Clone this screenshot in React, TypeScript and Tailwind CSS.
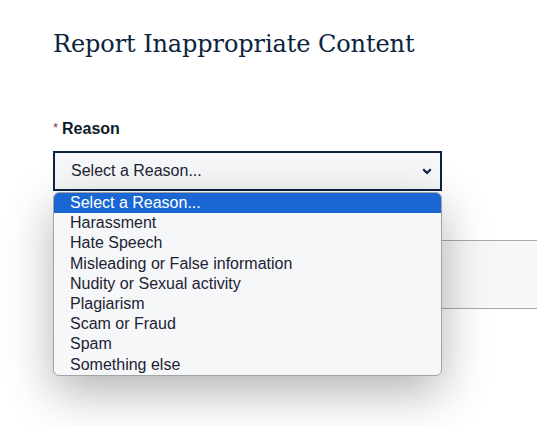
import React from "react";

const items = [
  "Select a Reason...",
  "Harassment",
  "Hate Speech",
  "Misleading or False information",
  "Nudity or Sexual activity",
  "Plagiarism",
  "Scam or Fraud",
  "Spam",
  "Something else",
];

export default function App() {
  return (
    <div className="w-[537px] h-[426px] overflow-hidden bg-white pl-[53px] pt-[27px] font-['Liberation_Sans',Arial,sans-serif]">
      <h1 className="text-[24px] leading-[34px] text-[#0c2340] font-['DejaVu_Serif',serif] tracking-[-0.1px] whitespace-nowrap">
        Report Inappropriate Content
      </h1>
      <div className="mt-[58px] flex items-baseline text-[16px] leading-[20px]">
        <span className="text-[#8a3b3b] text-[13px] mr-[4px] relative top-[-2px]">*</span>
        <span className="font-bold text-[#0d1b2a]">Reason</span>
      </div>
      <div className="relative mt-[11px] w-[389px]">
        <div className="h-[40px] border-2 border-[#0c2340] bg-[#f6f7f9] flex items-center pl-[16px] pr-[8px] text-[16px] text-[#1c2333]">
          <span className="flex-1">Select a Reason...</span>
          <svg width="10" height="7" viewBox="0 0 10 7" className="mt-[1px]">
            <path d="M1.2 1.3 L5 5 L8.8 1.3" fill="none" stroke="#0c2340" strokeWidth="2.2" />
          </svg>
        </div>
        <div className="absolute left-0 top-[41px] w-[389px] z-10 bg-[#f6f7f9] border border-[#a3a3a3] rounded-[6px] overflow-hidden shadow-[0_16px_48px_rgba(0,0,0,0.3)]">
          {items.map((it, i) => (
            <div
              key={it}
              className={
                i === 0
                  ? "h-[20.2px] leading-[19px] pl-[16px] text-[16px] bg-[#1a67d4] text-white"
                  : "h-[20.2px] leading-[19px] pl-[16px] text-[16px] text-[#1c2333]"
              }
            >
              {it}
            </div>
          ))}
        </div>
      </div>
      <div className="mt-[49px] w-[600px] h-[69px] border border-[#a8a8a8] bg-[#f6f7f9]" />
    </div>
  );
}
